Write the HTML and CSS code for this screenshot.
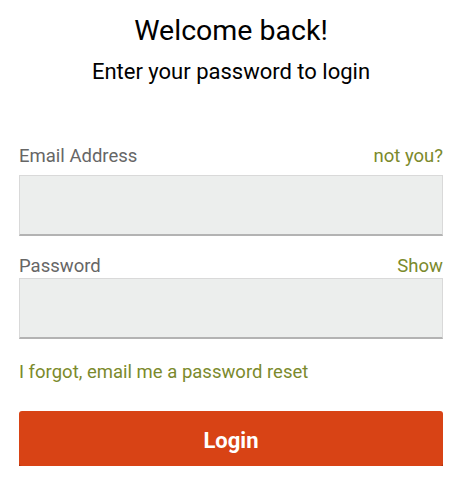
FILE: index.html
```html
<!DOCTYPE html>
<html>
<head>
<meta charset="utf-8">
<link rel="stylesheet" href="styles.css">
</head>
<body>
<div class="page">
  <h1 class="title">Welcome back!</h1>
  <p class="subtitle">Enter your password to login</p>
  <div class="field field-email">
    <div class="label-row">
      <span class="label">Email Address</span>
      <a class="link">not you?</a>
    </div>
    <div class="input"></div>
  </div>
  <div class="field field-password">
    <div class="label-row">
      <span class="label">Password</span>
      <a class="link">Show</a>
    </div>
    <div class="input"></div>
  </div>
  <a class="link forgot">I forgot, email me a password reset</a>
  <button class="btn">Login</button>
</div>
</body>
</html>
```
FILE: styles.css
```css
html, body {
  margin: 0;
  padding: 0;
  background: #ffffff;
}
body {
  font-family: Roboto, "Liberation Sans", sans-serif;
}
.page {
  padding: 14px 18px 0 19px;
  display: flex;
  flex-direction: column;
}
.title {
  margin: 0;
  font-size: 28.5px;
  font-weight: 400;
  line-height: 34px;
  text-align: center;
  color: #000;
}
.subtitle {
  margin: 10px 0 0;
  font-size: 22px;
  line-height: 28px;
  text-align: center;
  color: #000;
}
.field-email {
  margin-top: 58px;
}
.field-password {
  margin-top: 18px;
}
.label-row {
  display: flex;
  justify-content: space-between;
  align-items: baseline;
  font-size: 18.5px;
  line-height: 24px;
  margin-bottom: 7px;
}
.field-password .label-row {
  margin-bottom: 0;
}
.label {
  color: #666666;
}
.link {
  color: #7b8a2c;
  text-decoration: none;
  font-size: 18.5px;
}
.input {
  background: #eceeed;
  border: 1px solid #d9d9d9;
  border-bottom: 2px solid #b3b3b3;
  box-sizing: border-box;
  height: 61px;
}
.forgot {
  margin-top: 21px;
  line-height: 24px;
}
.btn {
  margin-top: 27px;
  height: 55px;
  border: none;
  border-radius: 3px;
  background: #d84315;
  box-shadow: 0 3px 0 #a8300c;
  color: #ffffff;
  font-family: Roboto, "Liberation Sans", sans-serif;
  font-size: 22px;
  font-weight: 700;
  padding: 4px 0 0;
}
```
